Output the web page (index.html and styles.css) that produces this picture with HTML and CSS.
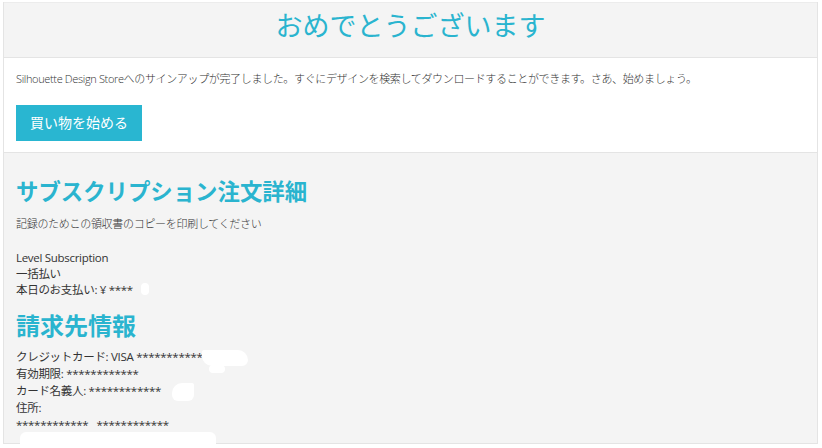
FILE: index.html
```html
<!DOCTYPE html>
<html lang="ja">
<head>
  <meta charset="UTF-8" />
  <meta name="viewport" content="width=device-width, initial-scale=1.0"/>
  <title>おめでとうございます | Silhouette Design Store</title>
  <link rel="stylesheet" href="styles.css">
</head>
<body>
  <div class="page">
    <div class="header">
      <h1>おめでとうございます</h1>
    </div>

    <div class="intro">
      <p>Silhouette Design Storeへのサインアップが完了しました。すぐにデザインを検索してダウンロードすることができます。さあ、始めましょう。</p>
      <a class="btn" href="#">買い物を始める</a>
    </div>

    <div class="details">
      <h2 class="order-title">サブスクリプション注文詳細</h2>
      <p class="note">記録のためこの領収書のコピーを印刷してください</p>

      <div class="lines">
        <p>Level Subscription</p>
        <p>一括払い</p>
        <p>本日のお支払い: ¥ ****</p>
      </div>

      <h2 class="billing-title">請求先情報</h2>
      <div class="lines billing">
        <p>クレジットカード: VISA ************</p>
        <p>有効期限: ************</p>
        <p>カード名義人: ************</p>
        <p>住所:</p>
        <p>************&nbsp;&nbsp;&nbsp;************</p>
      </div>

      <!-- redaction smudges -->
      <span class="smudge s1"></span>
      <span class="smudge s2"></span>
      <span class="smudge s3"></span>
      <span class="smudge s4"></span>
      <span class="smudge s5"></span>
    </div>
  </div>
</body>
</html>
```

FILE: styles.css
```css
:root {
  --teal: #2ab4cf;
  --text: #333;
  --gray-bg: #f4f4f4;
  --line: #e4e4e4;
}

* {
  margin: 0;
  padding: 0;
  box-sizing: border-box;
}

body {
  font-family: "Open Sans", "Noto Sans CJK JP", sans-serif;
  color: var(--text);
  background: #fff;
}

.page {
  margin: 2px 4px 0 3px;
  border-left: 1px solid var(--line);
  border-right: 1px solid var(--line);
  height: 442px;
  display: flex;
  flex-direction: column;
}

.header {
  background: var(--gray-bg);
  border-top: 1px solid #ececec;
  height: 55px;
  text-align: center;
}

.header h1 {
  font-size: 27px;
  font-weight: 400;
  color: var(--teal);
  line-height: 40px;
  padding-top: 3px;
}

.intro {
  background: #fff;
  border-top: 1px solid var(--line);
  border-bottom: 1px solid var(--line);
  padding: 13px 12px 11px;
}

.intro p {
  font-size: 11px;
  line-height: 16px;
  font-weight: 300;
  margin-bottom: 18px;
  letter-spacing: -0.35px;
}

.btn {
  display: inline-block;
  background: #29b6d1;
  color: #fff;
  font-size: 14px;
  line-height: 36px;
  padding: 0 14px;
  text-decoration: none;
}

.details {
  position: relative;
  flex: 1;
  background: var(--gray-bg);
  border-bottom: 1px solid var(--line);
  padding: 23px 12px 0;
}

.details h2 {
  color: var(--teal);
  font-weight: 700;
  line-height: 32px;
}

.order-title {
  font-size: 22.4px;
  margin-bottom: 8px;
}

.billing-title {
  font-size: 24px;
  margin-top: 12px;
  margin-bottom: 6px;
}

.note {
  font-size: 11px;
  font-weight: 300;
  line-height: 16px;
  margin-bottom: 18px;
  letter-spacing: -0.3px;
}

.lines p {
  font-size: 11.5px;
  line-height: 16px;
  letter-spacing: -0.3px;
}

.billing p {
  line-height: 17px;
}

.smudge {
  position: absolute;
  background: #fff;
  border-radius: 4px;
}

.s1 { left: 137px; top: 130px; width: 8px; height: 12px; }
.s2 { left: 198px; top: 197px; width: 46px; height: 16px; border-radius: 2px 10px 6px 10px; }
.s3 { left: 205px; top: 212px; width: 16px; height: 8px; }
.s4 { left: 168px; top: 230px; width: 22px; height: 18px; border-radius: 10px 2px 6px 6px; }
.s5 { left: 16px; top: 279px; width: 196px; height: 12px; border-radius: 6px 6px 0 0; }
```
